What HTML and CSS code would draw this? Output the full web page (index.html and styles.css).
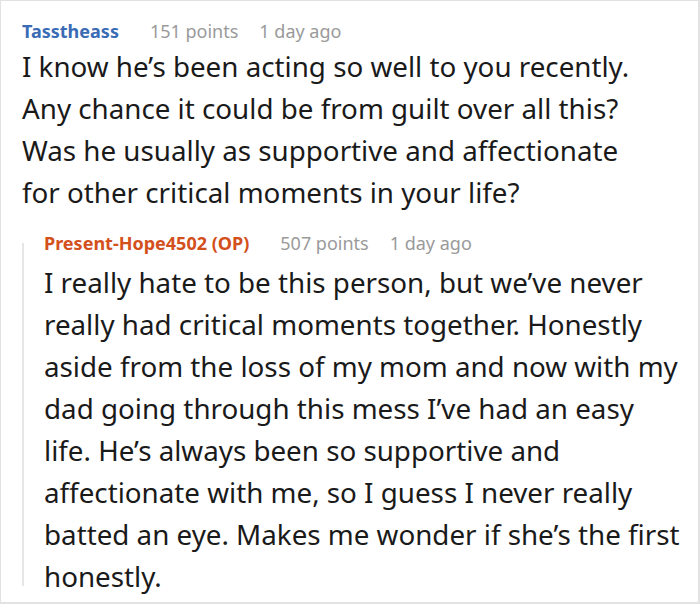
FILE: index.html
```html
<!DOCTYPE html>
<html>
<head>
<meta charset="utf-8">
<link rel="stylesheet" href="styles.css">
</head>
<body>
<div class="frame">
  <div class="comment">
    <div class="meta">
      <span class="author">Tasstheass</span>
      <span class="points">151 points</span>
      <span class="time">1 day ago</span>
    </div>
    <p class="text">I know he’s been acting so well to you recently.<br>Any chance it could be from guilt over all this?<br>Was he usually as supportive and affectionate<br>for other critical moments in your life?</p>
    <div class="reply">
      <div class="thread"></div>
      <div class="reply-body">
        <div class="meta">
          <span class="author op">Present-Hope4502 (OP)</span>
          <span class="points">507 points</span>
          <span class="time">1 day ago</span>
        </div>
        <p class="text">I really hate to be this person, but we’ve never<br>really had critical moments together. Honestly<br>aside from the loss of my mom and now with my<br>dad going through this mess I’ve had an easy<br>life. He’s always been so supportive and<br>affectionate with me, so I guess I never really<br>batted an eye. Makes me wonder if she’s the first<br>honestly.</p>
      </div>
    </div>
  </div>
</div>
</body>
</html>
```
FILE: styles.css
```css
html, body {
  margin: 0;
  padding: 0;
  background: #fff;
}
.frame {
  width: 700px;
  height: 604px;
  box-sizing: border-box;
  border-style: solid;
  border-color: #e2e2e2;
  border-width: 1px 2px 2px 1px;
  overflow: hidden;
  font-family: "Noto Sans", "Open Sans", sans-serif;
}
.comment {
  padding: 18px 0 0 21px;
}
.meta {
  display: flex;
  align-items: baseline;
  font-size: 18px;
  line-height: 24px;
  white-space: nowrap;
}
.author {
  font-weight: bold;
  color: #3a6bb5;
  margin-right: 31px;
}
.author.op {
  color: #d3501d;
}
.points {
  color: #9a9a9a;
  margin-right: 21px;
}
.time {
  color: #9a9a9a;
}
.text {
  margin: 2px 0 0;
  font-size: 27.75px;
  line-height: 42px;
  color: #1a1a1a;
  white-space: nowrap;
}
.reply {
  display: flex;
  margin-top: 18px;
}
.thread {
  flex: 0 0 2px;
  background: #e6e6e6;
  margin: 12px 20px 11px 0;
}
.reply-body .text {
  margin-top: 6px;
}
```
